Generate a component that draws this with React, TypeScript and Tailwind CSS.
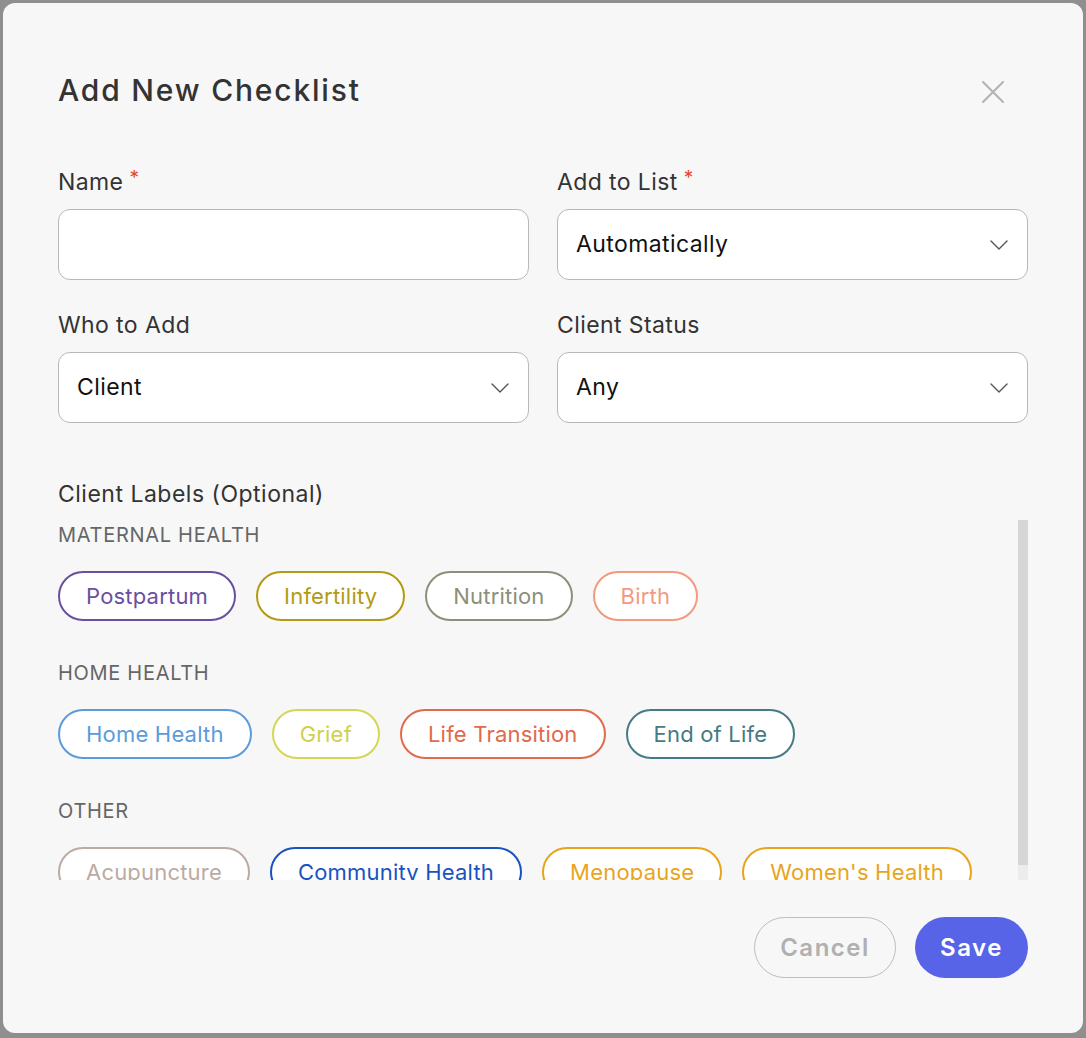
import React from 'react';

type Chip = { label: string; color: string };

const SECTIONS: { title: string; chips: Chip[] }[] = [
  {
    title: 'Maternal Health',
    chips: [
      { label: 'Postpartum', color: 'border-[#6a4f9f] text-[#6a4f9f]' },
      { label: 'Infertility', color: 'border-[#b39a12] text-[#b39a12]' },
      { label: 'Nutrition', color: 'border-[#8c8f79] text-[#8c8f79]' },
      { label: 'Birth', color: 'border-[#f29a7f] text-[#f29a7f]' },
    ],
  },
  {
    title: 'Home Health',
    chips: [
      { label: 'Home Health', color: 'border-[#5b9bdc] text-[#5b9bdc]' },
      { label: 'Grief', color: 'border-[#d5d655] text-[#cfd04f]' },
      { label: 'Life Transition', color: 'border-[#e06a4c] text-[#e06a4c]' },
      { label: 'End of Life', color: 'border-[#467a84] text-[#467a84]' },
    ],
  },
  {
    title: 'Other',
    chips: [
      { label: 'Acupuncture', color: 'border-[#bcaaa4] text-[#bcaaa4]' },
      { label: 'Community Health', color: 'border-[#1953c0] text-[#1953c0]' },
      { label: 'Menopause', color: 'border-[#e8a51c] text-[#e8a51c]' },
      { label: "Women's Health", color: 'border-[#e8a51c] text-[#e8a51c]' },
    ],
  },
];

const Chevron = () => (
  <svg width="18" height="10" viewBox="0 0 18 10" fill="none" className="shrink-0">
    <path d="M1 1l8 8 8-8" stroke="#555" strokeWidth="1.4" strokeLinecap="round" strokeLinejoin="round" />
  </svg>
);

const Label = ({ text, required }: { text: string; required?: boolean }) => (
  <div className="flex h-[28px] items-start text-[23px] leading-[28px] tracking-[0.4px] text-[#333]">
    {text}
    {required && <span className="ml-[6px] text-[19px] leading-[20px] text-[#e5452b]">*</span>}
  </div>
);

const Select = ({ value }: { value: string }) => (
  <div className="mt-[13px] flex h-[71px] items-center justify-between rounded-[12px] border border-[#b8b8b8] bg-white pl-[18px] pr-[19px]">
    <span className="text-[23px] tracking-[0.4px] text-[#111]">{value}</span>
    <Chevron />
  </div>
);

export default function App() {
  return (
    <div className="h-[1038px] w-[1086px] bg-[#8f8f8f] pl-[3px] pt-[3px] font-['Inter',sans-serif]">
      <div className="flex h-[1030px] w-[1080px] flex-col rounded-[12px] bg-[#f7f7f7] px-[55px]">
        <div className="mt-[69px] flex h-[36px] items-center justify-between">
          <h2 className="text-[30px] font-medium leading-[36px] tracking-[1.8px] text-[#333]">Add New Checklist</h2>
          <svg width="22" height="22" viewBox="0 0 22 22" className="mr-[24px] mt-[3px]">
            <path d="M1 1l20 20M21 1L1 21" stroke="#b3b3b3" strokeWidth="2" strokeLinecap="round" />
          </svg>
        </div>

        <div className="mt-[60px] grid grid-cols-2 gap-x-[28px]">
          <div>
            <Label text="Name" required />
            <div className="mt-[13px] h-[71px] rounded-[12px] border border-[#b8b8b8] bg-white" />
          </div>
          <div>
            <Label text="Add to List" required />
            <Select value="Automatically" />
          </div>
          <div className="mt-[31px]">
            <Label text="Who to Add" />
            <Select value="Client" />
          </div>
          <div className="mt-[31px]">
            <Label text="Client Status" />
            <Select value="Any" />
          </div>
        </div>

        <div className="mt-[57px] h-[28px] text-[23px] leading-[28px] tracking-[0.5px] text-[#333]">Client Labels (Optional)</div>

        <div className="mt-[12px] flex h-[360px]">
          <div className="flex-1 overflow-hidden">
            {SECTIONS.map((s, i) => (
              <div key={s.title} className={i === 0 ? 'mt-[3px]' : 'mt-[40px]'}>
                <div className="h-[24px] text-[20px] uppercase leading-[24px] tracking-[0.7px] text-[#666]">{s.title}</div>
                <div className="mt-[24px] flex gap-[20px]">
                  {s.chips.map(c => (
                    <div
                      key={c.label}
                      className={`flex h-[50px] items-center rounded-full border-[2.5px] bg-white px-[26px] text-[22px] tracking-[0.2px] ${c.color}`}
                    >
                      {c.label}
                    </div>
                  ))}
                </div>
              </div>
            ))}
          </div>
          <div className="flex w-[10px] flex-col bg-[#ececec]">
            <div className="h-[345px] bg-[#d6d6d6]" />
          </div>
        </div>

        <div className="mt-[37px] flex justify-end gap-[19px]">
          <button className="h-[61px] w-[142px] rounded-full border border-[#bdbdbd] text-[24px] font-semibold tracking-[1.5px] text-[#b0b0b0]">
            Cancel
          </button>
          <button className="h-[61px] w-[113px] rounded-full bg-[#5864e8] text-[24px] font-semibold tracking-[1.5px] text-white">
            Save
          </button>
        </div>
      </div>
    </div>
  );
}
